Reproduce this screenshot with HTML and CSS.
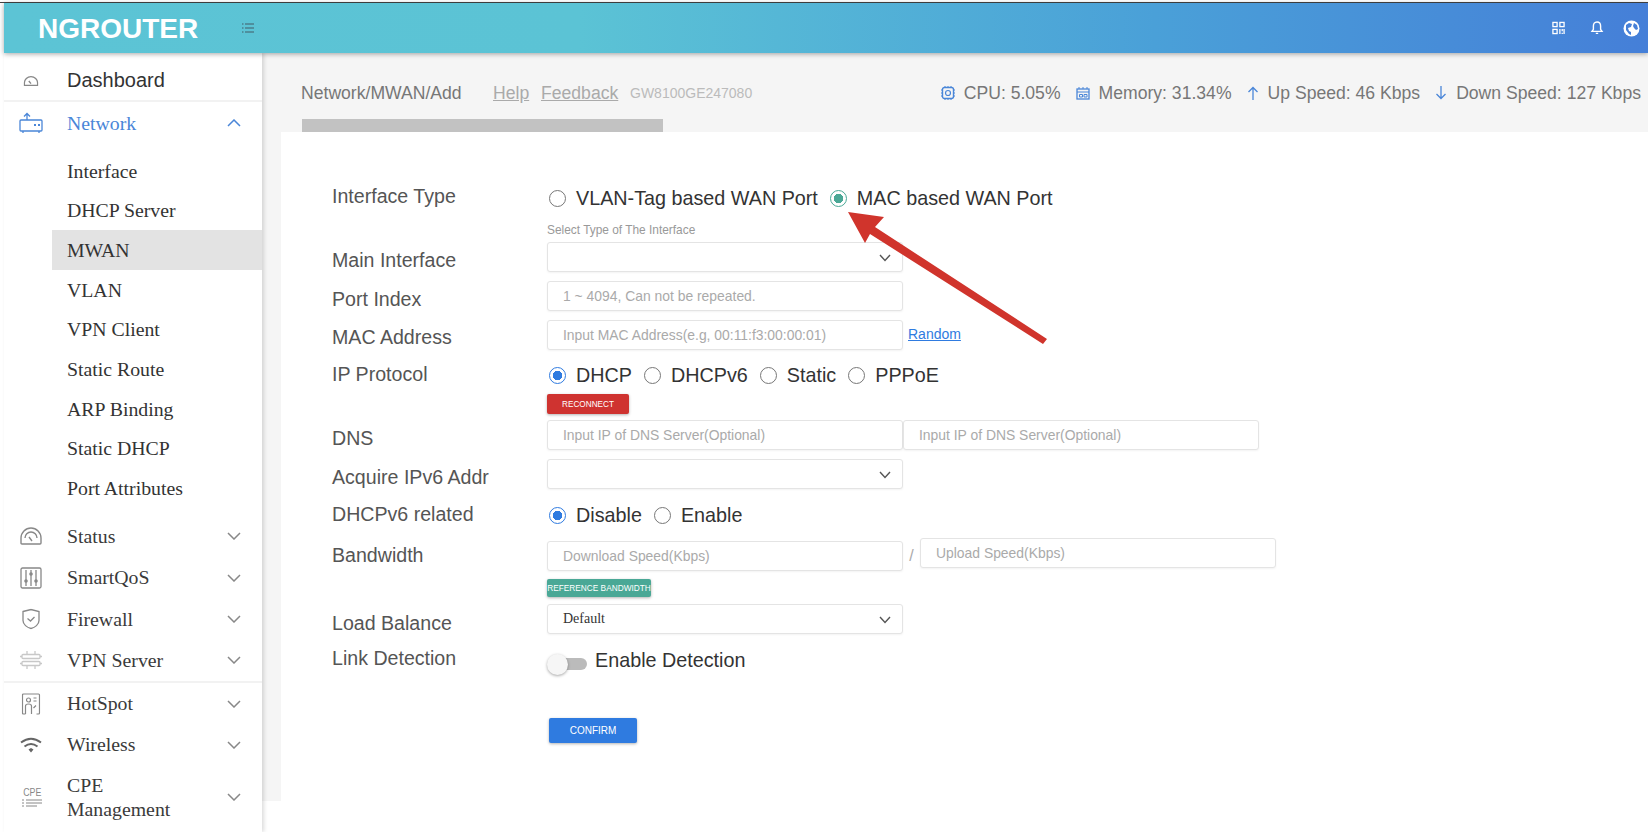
FILE: index.html
```html
<!DOCTYPE html>
<html lang="en">
<head>
<meta charset="utf-8">
<title>NGROUTER</title>
<link rel="stylesheet" href="styles.css">
</head>
<body>
<div class="app">
  <header class="topbar">
    <div class="brand">NGROUTER</div>
    <svg class="menu-btn" width="12" height="12" viewBox="0 0 12 12"><path d="M0 2h1.500M3 2h9M0 6h1.500M3 6h9M0 10h1.500M3 10h9" stroke="#4b7f8c" stroke-width="1.300"/></svg>
    <div class="top-icons">
      <svg width="13" height="14" viewBox="0 0 14 14"><g fill="none" stroke="#fff" stroke-width="1.400"><rect x="1" y="1" width="4.500" height="4.500"/><rect x="8.500" y="1" width="4.500" height="4.500"/><rect x="1" y="8.500" width="4.500" height="4.500"/><path d="M8.500 8v5.500M11 8v2.500M13 8v5.500M11 12v1.500"/></g></svg>
      <svg width="14" height="16" viewBox="0 0 14 16"><path d="M7 2c-2.600 0-3.600 2-3.600 4v3.400L2 11.400h10L10.600 9.400V6C10.600 4 9.600 2 7 2zM5.800 13.400h2.400" fill="none" stroke="#fff" stroke-width="1.400"/></svg>
      <svg width="17" height="17" viewBox="0 0 17 17"><circle cx="8.500" cy="8.500" r="8" fill="#fff"/><path d="M3 5l3-2 3 1-1 3-3 1 1 3 2 1v3l-2-1-3-4zM11 3l3 2 1 4-2 1-2-2-1-2z" fill="#4680d8"/></svg>
    </div>
  </header>
  <div class="body-row">
    <nav class="sidebar">
      <a class="nav-item nav-top">
        <svg class="nav-icon" width="15" height="11" viewBox="0 0 17 12"><path d="M1 11V8a7.500 7 0 0 1 15 0v3zM8.500 9L6 6" fill="none" stroke="#888" stroke-width="1.500"/></svg>
        <span class="nav-sans">Dashboard</span>
      </a>
      <a class="nav-item nav-open">
        <svg class="nav-icon" width="24" height="22" viewBox="0 0 24 22"><g fill="none" stroke="#4a86d8" stroke-width="1.300"><rect x="1" y="8" width="22" height="11" rx="1"/><path d="M8 8V2M5 4.500L8 1.500l3 3M4 19v2M20 19v2"/></g><path d="M15 13h2M19 13h2" stroke="#4a86d8" stroke-width="2"/></svg>
        <span class="nav-label">Network</span>
        <svg class="chev" width="14" height="8" viewBox="0 0 14 8"><path d="M1 7l6-6 6 6" fill="none" stroke="#4a86d8" stroke-width="1.500"/></svg>
      </a>
      <div class="submenu">
        <a class="sub-item">Interface</a>
        <a class="sub-item">DHCP Server</a>
        <a class="sub-item active">MWAN</a>
        <a class="sub-item">VLAN</a>
        <a class="sub-item">VPN Client</a>
        <a class="sub-item">Static Route</a>
        <a class="sub-item">ARP Binding</a>
        <a class="sub-item">Static DHCP</a>
        <a class="sub-item">Port Attributes</a>
      </div>
      <div class="nav-group">
        <a class="nav-item">
          <svg class="nav-icon" width="22" height="18" viewBox="0 0 22 18"><g fill="none" stroke="#888" stroke-width="1.400"><path d="M1 16V11a10 10 0 0 1 20 0v5q0 1-1 1H2q-1 0-1-1z"/><path d="M5 11a6 6 0 0 1 12 0M9 10l3 4"/></g></svg>
          <span class="nav-label">Status</span>
          <svg class="chev" width="14" height="8" viewBox="0 0 14 8"><path d="M1 1l6 6 6-6" fill="none" stroke="#888" stroke-width="1.500"/></svg>
        </a>
        <a class="nav-item">
          <svg class="nav-icon" width="22" height="22" viewBox="0 0 22 22"><g fill="none" stroke="#888" stroke-width="1.300"><rect x="1" y="1" width="20" height="20" rx="1.500"/><path d="M6 3v16M11 3v16M16 3v16"/></g><g fill="#888"><circle cx="6" cy="14" r="1.800"/><circle cx="11" cy="7" r="1.800"/><circle cx="16" cy="14" r="1.800"/></g></svg>
          <span class="nav-label">SmartQoS</span>
          <svg class="chev" width="14" height="8" viewBox="0 0 14 8"><path d="M1 1l6 6 6-6" fill="none" stroke="#888" stroke-width="1.500"/></svg>
        </a>
        <a class="nav-item">
          <svg class="nav-icon" width="18" height="21" viewBox="0 0 18 21"><path d="M1 3l8-2 8 2v9c0 4-4 7-8 8-4-1-8-4-8-8zM5.500 10l3 2.500 4-4" fill="none" stroke="#888" stroke-width="1.300"/></svg>
          <span class="nav-label">Firewall</span>
          <svg class="chev" width="14" height="8" viewBox="0 0 14 8"><path d="M1 1l6 6 6-6" fill="none" stroke="#888" stroke-width="1.500"/></svg>
        </a>
        <a class="nav-item">
          <svg class="nav-icon" width="22" height="18" viewBox="0 0 22 18"><g fill="none" stroke="#c8c8c8" stroke-width="1.300"><rect x="2" y="3.500" width="18" height="4" rx="1"/><rect x="2" y="10.500" width="18" height="4" rx="1"/><path d="M7 0v3.500M15 0v3.500M7 14.500V18M15 14.500V18M0 5.500h2M20 5.500h2M0 12.500h2M20 12.500h2"/></g></svg>
          <span class="nav-label">VPN Server</span>
          <svg class="chev" width="14" height="8" viewBox="0 0 14 8"><path d="M1 1l6 6 6-6" fill="none" stroke="#888" stroke-width="1.500"/></svg>
        </a>
      </div>
      <div class="nav-group nav-group-last">
        <a class="nav-item">
          <svg class="nav-icon" width="19" height="22" viewBox="0 0 19 22"><g fill="none" stroke="#888" stroke-width="1.200"><path d="M4 21H2q-1 0-1-1V2q0-1 1-1h15q1 0 1 1v18q0 1-1 1h-2"/><circle cx="7" cy="7" r="2"/><path d="M4 21v-8q0-2 3-2t3 2v8M12 5h3M12 8h3M12 15l2.500-2.500"/></g></svg>
          <span class="nav-label">HotSpot</span>
          <svg class="chev" width="14" height="8" viewBox="0 0 14 8"><path d="M1 1l6 6 6-6" fill="none" stroke="#888" stroke-width="1.500"/></svg>
        </a>
        <a class="nav-item">
          <svg class="nav-icon" width="22" height="16" viewBox="0 0 22 16"><g fill="none" stroke="#666" stroke-width="2"><path d="M1 5.500q10-7.500 20 0M4.500 9.500q6.500-5 13 0"/></g><path d="M8.500 12.500l2.500-1.500 2.500 1.500L11 15.500z" fill="#666"/></svg>
          <span class="nav-label">Wireless</span>
          <svg class="chev" width="14" height="8" viewBox="0 0 14 8"><path d="M1 1l6 6 6-6" fill="none" stroke="#888" stroke-width="1.500"/></svg>
        </a>
        <a class="nav-item nav-tall">
          <span class="cpe-icon"><span class="cpe-text">CPE</span><svg width="20" height="8" viewBox="0 0 20 8"><path d="M0 1h2M4 1h16M0 4h2M4 4h16M0 7h2M4 7h11" stroke="#888" stroke-width="1"/></svg></span>
          <span class="nav-label">CPE<br>Management</span>
          <svg class="chev" width="14" height="8" viewBox="0 0 14 8"><path d="M1 1l6 6 6-6" fill="none" stroke="#888" stroke-width="1.500"/></svg>
        </a>
      </div>
    </nav>
    <main class="main">
      <div class="status-bar">
        <span class="crumb">Network/MWAN/Add</span>
        <a class="muted-link link-help">Help</a>
        <a class="muted-link link-feedback">Feedback</a>
        <span class="serial">GW8100GE247080</span>
        <div class="stats">
          <span class="stat"><svg width="14" height="14" viewBox="0 0 14 14"><rect x="1.500" y="1.500" width="11" height="11" rx="2" fill="none" stroke="#4a86d8" stroke-width="1.400"/><circle cx="7" cy="7" r="2.500" fill="none" stroke="#4a86d8" stroke-width="1.200"/><path d="M4 0v1.500M7 0v1.500M10 0v1.500M4 12.500V14M7 12.500V14M10 12.500V14M0 4h1.500M0 7h1.500M0 10h1.500M12.500 4H14M12.500 7H14M12.500 10H14" stroke="#4a86d8"/></svg>CPU: 5.05%</span>
          <span class="stat"><svg width="14" height="13" viewBox="0 0 14 13"><rect x="1" y="2" width="12" height="10" fill="none" stroke="#4a86d8" stroke-width="1.300"/><path d="M1 5h12M3 0v2M7 0v2M11 0v2M3.500 7.500h3v2.500h-3zM8 7.500h3v2.500H8z" fill="none" stroke="#4a86d8"/></svg>Memory: 31.34%</span>
          <span class="stat stat-arrow"><svg width="12" height="14" viewBox="0 0 12 14"><path d="M6 14V1.500M1.500 6L6 1.500 10.500 6" fill="none" stroke="#4a86d8" stroke-width="1.300"/></svg>Up Speed: 46 Kbps</span>
          <span class="stat stat-arrow"><svg width="12" height="14" viewBox="0 0 12 14"><path d="M6 0v12.500M1.500 8L6 12.500 10.500 8" fill="none" stroke="#4a86d8" stroke-width="1.300"/></svg>Down Speed: 127 Kbps</span>
        </div>
      </div>
      <div class="scroll-track"><div class="scroll-thumb"></div></div>
      <div class="panel">
        <form class="form">
          <div class="row row-type">
            <label class="label">Interface Type</label>
            <div class="radios">
              <span class="radio"></span><span class="radio-text">VLAN-Tag based WAN Port</span>
              <span class="radio radio-teal"></span><span class="radio-text">MAC based WAN Port</span>
            </div>
          </div>
          <div class="hint">Select Type of The Interface</div>
          <div class="row row-main">
            <label class="label">Main Interface</label>
            <div class="select"><svg class="select-chev" width="12" height="8" viewBox="0 0 12 8"><path d="M1 1l5 5.500L11 1" fill="none" stroke="#555" stroke-width="1.400"/></svg></div>
          </div>
          <div class="row row-port">
            <label class="label">Port Index</label>
            <input class="input" placeholder="1 ~ 4094, Can not be repeated.">
          </div>
          <div class="row row-mac">
            <label class="label">MAC Address</label>
            <input class="input" placeholder="Input MAC Address(e.g, 00:11:f3:00:00:01)">
            <a class="random">Random</a>
          </div>
          <div class="row row-proto">
            <label class="label">IP Protocol</label>
            <div class="radios">
              <span class="radio radio-blue"></span><span class="radio-text">DHCP</span>
              <span class="radio"></span><span class="radio-text">DHCPv6</span>
              <span class="radio"></span><span class="radio-text">Static</span>
              <span class="radio"></span><span class="radio-text">PPPoE</span>
            </div>
          </div>
          <div class="btn-line"><button type="button" class="btn btn-red">RECONNECT</button></div>
          <div class="row row-dns">
            <label class="label">DNS</label>
            <input class="input" placeholder="Input IP of DNS Server(Optional)">
            <input class="input" placeholder="Input IP of DNS Server(Optional)">
          </div>
          <div class="row row-acq">
            <label class="label">Acquire IPv6 Addr</label>
            <div class="select"><svg class="select-chev" width="12" height="8" viewBox="0 0 12 8"><path d="M1 1l5 5.500L11 1" fill="none" stroke="#555" stroke-width="1.400"/></svg></div>
          </div>
          <div class="row row-rel">
            <label class="label">DHCPv6 related</label>
            <div class="radios">
              <span class="radio radio-blue"></span><span class="radio-text">Disable</span>
              <span class="radio"></span><span class="radio-text">Enable</span>
            </div>
          </div>
          <div class="row row-band">
            <label class="label">Bandwidth</label>
            <input class="input" placeholder="Download Speed(Kbps)">
            <span class="slash">/</span>
            <input class="input input-up" placeholder="Upload Speed(Kbps)">
          </div>
          <div class="btn-line btn-line-ref"><button type="button" class="btn btn-teal">REFERENCE BANDWIDTH</button></div>
          <div class="row row-load">
            <label class="label">Load Balance</label>
            <div class="select"><span class="select-value">Default</span><svg class="select-chev" width="12" height="8" viewBox="0 0 12 8"><path d="M1 1l5 5.500L11 1" fill="none" stroke="#555" stroke-width="1.400"/></svg></div>
          </div>
          <div class="row row-link">
            <label class="label">Link Detection</label>
            <span class="switch"><span class="knob"></span></span>
            <span class="radio-text switch-text">Enable Detection</span>
          </div>
          <div class="btn-line btn-line-confirm"><button type="button" class="btn btn-blue">CONFIRM</button></div>
        </form>
      </div>
      <div class="foot"></div>
    </main>
  </div>
  <svg class="annotation" width="220" height="150" viewBox="0 0 220 150"><path d="M8 5L44 10 35 20 207 132 203 137 30 27 25 36z" fill="#d0342c"/></svg>
</div>
</body>
</html>
```
FILE: styles.css
```css
* { box-sizing: border-box; }
html, body { margin: 0; height: 100%; }
body { background: #fff; overflow: hidden; font-family: "Liberation Sans", sans-serif; }
.app { position: relative; width: 1648px; height: 832px; overflow: hidden; padding: 2px 0 0 0; }
.app::before { content: ""; display: block; height: 1px; background: #444; }

.topbar { position: relative; z-index: 3; margin-left: 4px; height: 50px; display: flex; align-items: center; background: linear-gradient(90deg, #5cc4d5 0%, #5bc3d5 35%, #4aa0d8 70%, #457fd8 100%); box-shadow: 0 1px 5px rgba(0,0,0,.35); }
.brand { margin-left: 34px; padding-top: 1px; font: bold 28px "Liberation Sans", sans-serif; color: #fff; width: 204px; }
.menu-btn { display: block; }
.top-icons { margin-left: auto; display: flex; align-items: center; padding-right: 8px; }
.top-icons svg + svg { margin-left: 19px; }
.top-icons svg:first-child { margin-right: 6px; }

.body-row { display: flex; margin-left: 4px; height: 779px; }
.sidebar { position: relative; z-index: 2; flex: none; width: 258px; background: #fff; box-shadow: 2px 0 4px rgba(0,0,0,.14); font-family: "Liberation Serif", serif; font-size: 19.800px; color: #333; }
.nav-item { position: relative; display: flex; align-items: center; height: 41.300px; padding-left: 63px; color: #3a3a3a; }
.nav-top { height: 49px; padding-top: 8px; border-bottom: 2px solid #f2f2f2; }
.nav-top .nav-icon { top: 60%; }
.nav-icon { position: absolute; left: 27px; top: 50%; transform: translate(-50%, -50%); }
.nav-sans { font: 20px "Liberation Sans", sans-serif; color: #333; }
.nav-open { height: 42px; color: #4a86d8; }
.chev { position: absolute; left: 223px; top: 50%; margin-top: -4px; }
.submenu { margin-top: 7px; padding-left: 48px; }
.sub-item { display: flex; align-items: center; height: 39.650px; padding: 1px 0 0 15px; }
.sub-item.active { background: #e3e3e3; }
.nav-group { margin-top: 8px; border-bottom: 2px solid #f2f2f2; }
.nav-group-last { margin-top: 0; border-bottom: 0; }
.nav-tall { height: 62px; line-height: 24px; }
.cpe-icon { position: absolute; left: 18px; top: 50%; transform: translateY(-50%); display: flex; flex-direction: column; align-items: center; gap: 1px; width: 20px; }
.cpe-text { font: 11px/11px "Liberation Sans", sans-serif; color: #888; transform: scaleX(.8); }
.cpe-icon svg { display: block; }

.main { flex: 1; min-width: 0; display: flex; flex-direction: column; background: #fff; }
.status-bar { height: 66px; flex: none; display: flex; align-items: center; background: #f5f5f5; padding: 14px 7px 0 39px; color: #777; font: 17.600px "Liberation Sans", sans-serif; white-space: nowrap; }
.crumb { width: 192px; }
.muted-link { color: #aaa; text-decoration: underline; }
.link-help { width: 48px; }
.link-feedback { width: 89px; }
.serial { font-size: 14px; color: #bbb; }
.stats { margin-left: auto; display: flex; gap: 15px; }
.stat { display: flex; align-items: center; gap: 9px; }
.stat-arrow { gap: 9px; }
.scroll-track { height: 13px; flex: none; background: #f5f5f5; padding-left: 40px; }
.scroll-thumb { width: 361px; height: 13px; background: #c2c2c2; }
.panel { height: 669px; flex: none; background: #f5f5f5; padding-left: 19px; }
.form { height: 100%; background: #fff; padding: 53px 0 0 51px; }
.row { display: flex; align-items: flex-start; }
.label { flex: none; width: 215px; margin-top: -1px; font-size: 19.600px; line-height: 24px; color: #555; }
.radios { display: flex; align-items: center; height: 24px; padding-left: 2px; }
.radio { width: 17px; height: 17px; flex: none; border: 1.500px solid #777; border-radius: 50%; margin-right: 10px; background: #fff; }
.radio-teal { border-color: #4aa896; background: radial-gradient(circle, #4aa896 0 4.500px, #fff 5px); }
.radio-blue { border-color: #2f7be0; background: radial-gradient(circle, #2f7be0 0 4.500px, #fff 5px); }
.radio-text { font-size: 19.750px; line-height: 24px; color: #333; margin-right: 12px; white-space: nowrap; }
.hint { margin: 13px 0 0 215px; height: 15px; font-size: 11.900px; line-height: 15px; color: #999; }
.row-type .radios { margin-top: 1px; }
.select, .input { flex: none; width: 356px; height: 30px; border: 1px solid #e4e4e4; border-radius: 3px; background: #fff; box-shadow: 0 1px 2px rgba(0,0,0,.05); }
.select { position: relative; display: flex; align-items: center; padding-left: 15px; }
.select-value { font: 14px "Liberation Serif", serif; color: #333; }
.select-chev { position: absolute; right: 11px; top: 11px; }
.input { padding: 0 15px 1px; font: 13.900px "Liberation Sans", sans-serif; color: #333; outline: none; }
.input::placeholder { color: #aaa; opacity: 1; }
.row-main { margin-top: 4px; }
.row-main .label { padding-top: 7px; }
.row-port { margin-top: 9px; }
.row-port .label { padding-top: 7px; }
.row-mac { margin-top: 9px; }
.row-mac .label { padding-top: 6px; }
.random { margin: 6px 0 0 5px; font-size: 14px; color: #2f7be0; text-decoration: underline; }
.row-proto { margin-top: 13px; }
.btn-line { height: 20px; margin: 7px 0 0 215px; }
.btn { display: block; border: 0; padding: 0; color: #fff; border-radius: 2px; font: 8.200px "Liberation Sans", sans-serif; box-shadow: 0 1px 3px rgba(0,0,0,.3); }
.btn-red { width: 82px; height: 20px; background: #cf3330; }
.row-dns { margin-top: 6px; }
.row-dns .label { padding-top: 7px; }
.row-acq { margin-top: 9px; }
.row-acq .label { padding-top: 7px; }
.row-rel { margin-top: 14px; }
.row-band { margin-top: 14px; }
.row-band .label { padding-top: 3px; }
.slash { flex: none; width: 17px; text-align: center; line-height: 30px; font-size: 16px; color: #aaa; }
.input-up { margin-top: -3px; }
.btn-line-ref { margin-top: 8px; height: 18px; }
.btn-teal { width: 104px; height: 18px; background: #4aa896; font-size: 8.300px; white-space: nowrap; }
.row-load { margin-top: 7px; }
.row-load .label { padding-top: 8px; }
.row-link { margin-top: 12px; }
.switch { position: relative; flex: none; width: 40px; height: 24px; margin: 5px 8px 0 0; }
.switch::before { content: ""; position: absolute; left: 8px; right: 0; top: 6px; height: 12px; background: #bbb; border-radius: 6px; }
.knob { position: absolute; left: 0; top: 2px; width: 21px; height: 21px; border-radius: 50%; background: #f6f6f6; box-shadow: 0 1px 3px rgba(0,0,0,.35); }
.switch-text { margin-top: 1px; }
.btn-line-confirm { margin: 42px 0 0 217px; height: 25px; }
.btn-blue { width: 88px; height: 25px; background: #2f7be0; font-size: 10px; }
.foot { flex: 1; background: #fff; }
.annotation { position: absolute; left: 840px; top: 207px; z-index: 4; }
```
